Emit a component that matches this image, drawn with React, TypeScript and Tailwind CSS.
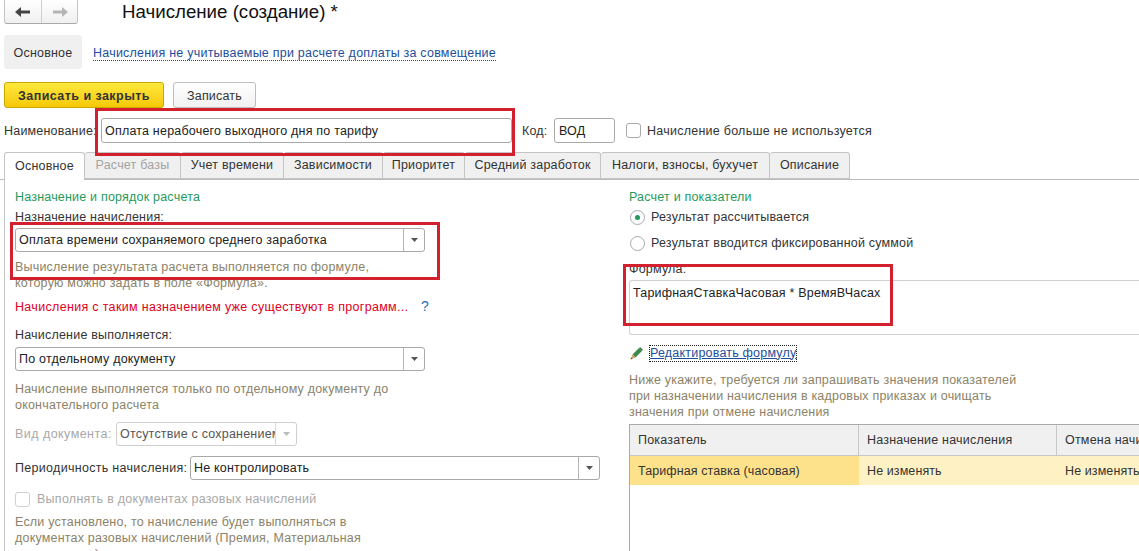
const tabs = ["Расчет базы", "Учет времени", "Зависимости", "Приоритет", "Средний заработок", "Налоги, взносы, бухучет", "Описание"];
const tabWidths = ["w-[96px]", "w-[103px]", "w-[99px]", "w-[82px]", "w-[136px]", "w-[169px]", "w-[80px]"];

const Caret = ({ light }: { light?: boolean }) => (
  <svg width="7" height="4" viewBox="0 0 7 4" className={light ? "opacity-40" : ""}>
    <path d="M0 0h7L3.5 4z" fill="#555" />
  </svg>
);

function Select({ value, className, muted }: { value: string; className: string; muted?: boolean }) {
  return (
    <div className={`flex h-[24px] items-center rounded-[3px] border ${muted ? "border-[#cfcfcf] text-[#555]" : "border-[#a9a9a9] text-[#222]"} bg-white ${className}`}>
      <span className="flex-1 overflow-hidden whitespace-nowrap pl-[3px]">{value}</span>
      <span className={`flex h-full w-[21px] shrink-0 items-center justify-center border-l ${muted ? "border-[#d8d8d8]" : "border-[#b5b5b5]"}`}>
        <Caret light={muted} />
      </span>
    </div>
  );
}

const Hint = ({ children }: { children: React.ReactNode }) => (
  <div className="h-[16px] leading-[16px] whitespace-nowrap text-[#8b8268]">{children}</div>
);

export default function App() {
  return (
    <div className="relative h-[551px] w-[1139px] overflow-hidden bg-white text-[12.5px] leading-[16px] tracking-[0.2px] text-[#333] [font-family:'Liberation_Sans',Arial,sans-serif]">
      {/* Title row */}
      <div className="flex h-[25px] items-start pl-[4px]">
        <div className="flex h-[24px] w-[74px] rounded-b-[3px] border border-t-0 border-[#c4c4c4] border-b-[#aaa] bg-gradient-to-b from-white to-[#f0f0f0]">
          <div className="flex w-[37px] items-center justify-center border-r border-[#d0d0d0]">
            <svg width="16" height="10" viewBox="0 0 16 10"><path d="M15 3.500H6V0L0 5l6 5V6.500h9z" fill="#444" /></svg>
          </div>
          <div className="flex flex-1 items-center justify-center">
            <svg width="16" height="10" viewBox="0 0 16 10"><path d="M1 3.500h9V0l6 5-6 5V6.500H1z" fill="#b5b5b5" /></svg>
          </div>
        </div>
        <h1 className="ml-[44px] text-[18.7px] leading-[24px] tracking-normal text-[#111]">Начисление (создание) *</h1>
      </div>

      {/* Form sections */}
      <div className="mt-[10px] flex h-[34px] items-center pl-[4px]">
        <div className="flex h-full w-[78px] items-center justify-center rounded-[3px] bg-[#f0f0f0] pt-[1px]">Основное</div>
        <a className="ml-[11px] mt-[2px] border-b border-dotted border-[#1b4f9c] leading-[14px] tracking-[0.22px] text-[#1b4f9c]">Начисления не учитываемые при расчете доплаты за совмещение</a>
      </div>

      {/* Command bar */}
      <div className="mt-[13px] flex h-[26px] gap-[9px] pl-[4px]">
        <button className="h-full w-[160px] rounded-[3px] border border-[#c9a800] bg-gradient-to-b from-[#ffe93a] to-[#f5c800] pt-[1px] font-bold tracking-[0.45px] text-[#333]">Записать и закрыть</button>
        <button className="h-full w-[83px] rounded-[3px] border border-[#bdbdbd] bg-gradient-to-b from-white to-[#f1f1f1] pt-[1px]">Записать</button>
      </div>

      {/* Name row */}
      <div className="mt-[10px] flex h-[25px] items-center pl-[4px]">
        <span className="w-[97px] whitespace-nowrap">Наименование:</span>
        <div className="flex h-full w-[411px] items-center rounded-[3px] border border-[#a9a9a9] pl-[3px] text-[#222]">Оплата нерабочего выходного дня по тарифу</div>
        <span className="ml-[10px] w-[32px]">Код:</span>
        <div className="flex h-full w-[61px] items-center rounded-[3px] border border-[#a9a9a9] pl-[4px] text-[#222]">ВОД</div>
        <span className="ml-[11px] h-[15px] w-[15px] rounded-[3px] border border-[#a9a9a9]" />
        <span className="ml-[6px] tracking-[0.25px]">Начисление больше не используется</span>
      </div>

      {/* Tabs */}
      <div className="mt-[9px] flex h-[28px] border-b border-[#bcbcbc] pl-[4px]">
        <div className="flex h-[28px] w-[81px] items-center justify-center rounded-t-[3px] border border-b-0 border-[#c4c4c4] bg-white pb-[2px]">Основное</div>
        {tabs.map((tab, i) => (
          <div
            key={tab}
            className={`flex h-[27px] items-center justify-center whitespace-nowrap rounded-t-[3px] border border-l-0 border-[#c4c4c4] bg-[#f0f0f0] pb-[1px] ${tabWidths[i]} ${i === 0 ? "text-[#a3a3a3]" : ""}`}
          >
            {tab}
          </div>
        ))}
      </div>

      {/* Tab body */}
      <div className="ml-[4px] flex h-[372px] border-l border-[#c4c4c4]">
        {/* Left column */}
        <div className="w-[624px] shrink-0 pl-[10px] pt-[9px]">
          <div className="text-[#1f9a5b]">Назначение и порядок расчета</div>
          <div className="mt-[4px]">Назначение начисления:</div>
          <Select value="Оплата времени сохраняемого среднего заработка" className="mt-[3px] w-[410px]" />
          <div className="mt-[7px]">
            <Hint>Вычисление результата расчета выполняется по формуле,</Hint>
            <Hint>которую можно задать в поле «Формула».</Hint>
          </div>
          <div className="mt-[8px] flex h-[16px] w-[414px] items-center justify-between tracking-[0.32px] text-[#e0001b]">
            <span className="whitespace-nowrap">Начисления с таким назначением уже существуют в программ...</span>
            <span className="mb-[3px] text-[14px] text-[#1f6fb5]">?</span>
          </div>
          <div className="mt-[12px]">Начисление выполняется:</div>
          <Select value="По отдельному документу" className="mt-[4px] w-[410px]" />
          <div className="mt-[10px]">
            <Hint>Начисление выполняется только по отдельному документу до</Hint>
            <Hint>окончательного расчета</Hint>
          </div>
          <div className="mt-[9px] flex items-center">
            <span className="w-[101px] tracking-[0.45px] text-[#a8a8a8]">Вид документа:</span>
            <Select value="Отсутствие с сохранением" muted className="w-[181px]" />
          </div>
          <div className="mt-[10px] flex items-center">
            <span className="w-[175px] whitespace-nowrap tracking-[0.3px]">Периодичность начисления:</span>
            <Select value="Не контролировать" className="w-[410px]" />
          </div>
          <div className="mt-[11px] flex h-[16px] items-center tracking-[0.27px] text-[#a8a8a8]">
            <span className="h-[15px] w-[15px] rounded-[3px] border border-[#d0d0d0]" />
            <span className="ml-[7px]">Выполнять в документах разовых начислений</span>
          </div>
          <div className="mt-[7px]">
            <Hint>Если установлено, то начисление будет выполняться в</Hint>
            <Hint>документах разовых начислений (Премия, Материальная</Hint>
            <Hint>помощь и др.), а также в документах разового расчета</Hint>
          </div>
        </div>

        {/* Right column */}
        <div className="min-w-0 flex-1 pt-[9px]">
          <div className="text-[#1f9a5b]">Расчет и показатели</div>
          <div className="mt-[4px] flex h-[16px] items-center pl-[1px]">
            <span className="flex h-[15px] w-[15px] items-center justify-center rounded-full border border-[#a9a9a9]">
              <span className="h-[5px] w-[5px] rounded-full bg-[#1f9a5b]" />
            </span>
            <span className="ml-[6px]">Результат рассчитывается</span>
          </div>
          <div className="mt-[10px] flex h-[16px] items-center pl-[1px]">
            <span className="h-[15px] w-[15px] rounded-full border border-[#a9a9a9]" />
            <span className="ml-[6px]">Результат вводится фиксированной суммой</span>
          </div>
          <div className="mt-[10px]">Формула:</div>
          <div className="mt-[3px] h-[55px] w-[520px] rounded-l-[3px] border border-r-0 border-[#d0d0d0] pl-[3px] pt-[4px] text-[#222]">ТарифнаяСтавкаЧасовая * ВремяВЧасах</div>
          <div className="mt-[9px] flex h-[18px] items-center pl-[1px]">
            <svg width="13" height="13" viewBox="0 0 13 13">
              <path d="M2.500 7.500 9 1l3 3-6.500 6.500z" fill="#3d8b4a" />
              <path d="M9 1l1.200-.8 2.600 2.600L12 4z" fill="#2c6b38" />
              <path d="M2.500 7.500l3 3L.5 12.500z" fill="#c9a36a" />
              <path d="M1.300 10.500l1.200 1-2 1z" fill="#444" />
            </svg>
            <a className="ml-[6px] border border-dotted border-[#222] leading-[15px] text-[#1b4f9c] underline">Редактировать формулу</a>
          </div>
          <div className="mt-[10px]">
            <Hint>Ниже укажите, требуется ли запрашивать значения показателей</Hint>
            <Hint>при назначении начисления в кадровых приказах и очищать</Hint>
            <Hint>значения при отмене начисления</Hint>
          </div>
          <div className="mt-[4px] h-[140px] w-[520px] border-l border-t border-[#a9a9a9]">
            <div className="flex h-[31px] border-b border-[#c8c8c8] bg-[#f0f0f0]">
              <div className="flex w-[229px] shrink-0 items-center border-r border-[#c8c8c8] pl-[8px]">Показатель</div>
              <div className="flex w-[198px] shrink-0 items-center border-r border-[#c8c8c8] pl-[8px]">Назначение начисления</div>
              <div className="flex min-w-0 flex-1 items-center whitespace-nowrap pl-[8px]">Отмена начисления</div>
            </div>
            <div className="flex h-[29px] tracking-[0.1px]">
              <div className="flex w-[229px] shrink-0 items-center bg-[#fee28b] pl-[8px]">Тарифная ставка (часовая)</div>
              <div className="flex w-[198px] shrink-0 items-center bg-[#fef2c4] pl-[8px]">Не изменять</div>
              <div className="flex min-w-0 flex-1 items-center whitespace-nowrap bg-[#fef2c4] pl-[8px]">Не изменять</div>
            </div>
          </div>
        </div>
      </div>

      {/* Red highlight frames drawn over the form */}
      <div className="pointer-events-none absolute left-[95px] top-[108px] h-[48px] w-[420px] border-[3px] border-[#d2202f]" />
      <div className="pointer-events-none absolute left-[10px] top-[222px] h-[58px] w-[430px] border-[3px] border-[#d2202f]" />
      <div className="pointer-events-none absolute left-[623px] top-[264px] h-[62px] w-[270px] border-[3px] border-[#d2202f]" />
    </div>
  );
}
